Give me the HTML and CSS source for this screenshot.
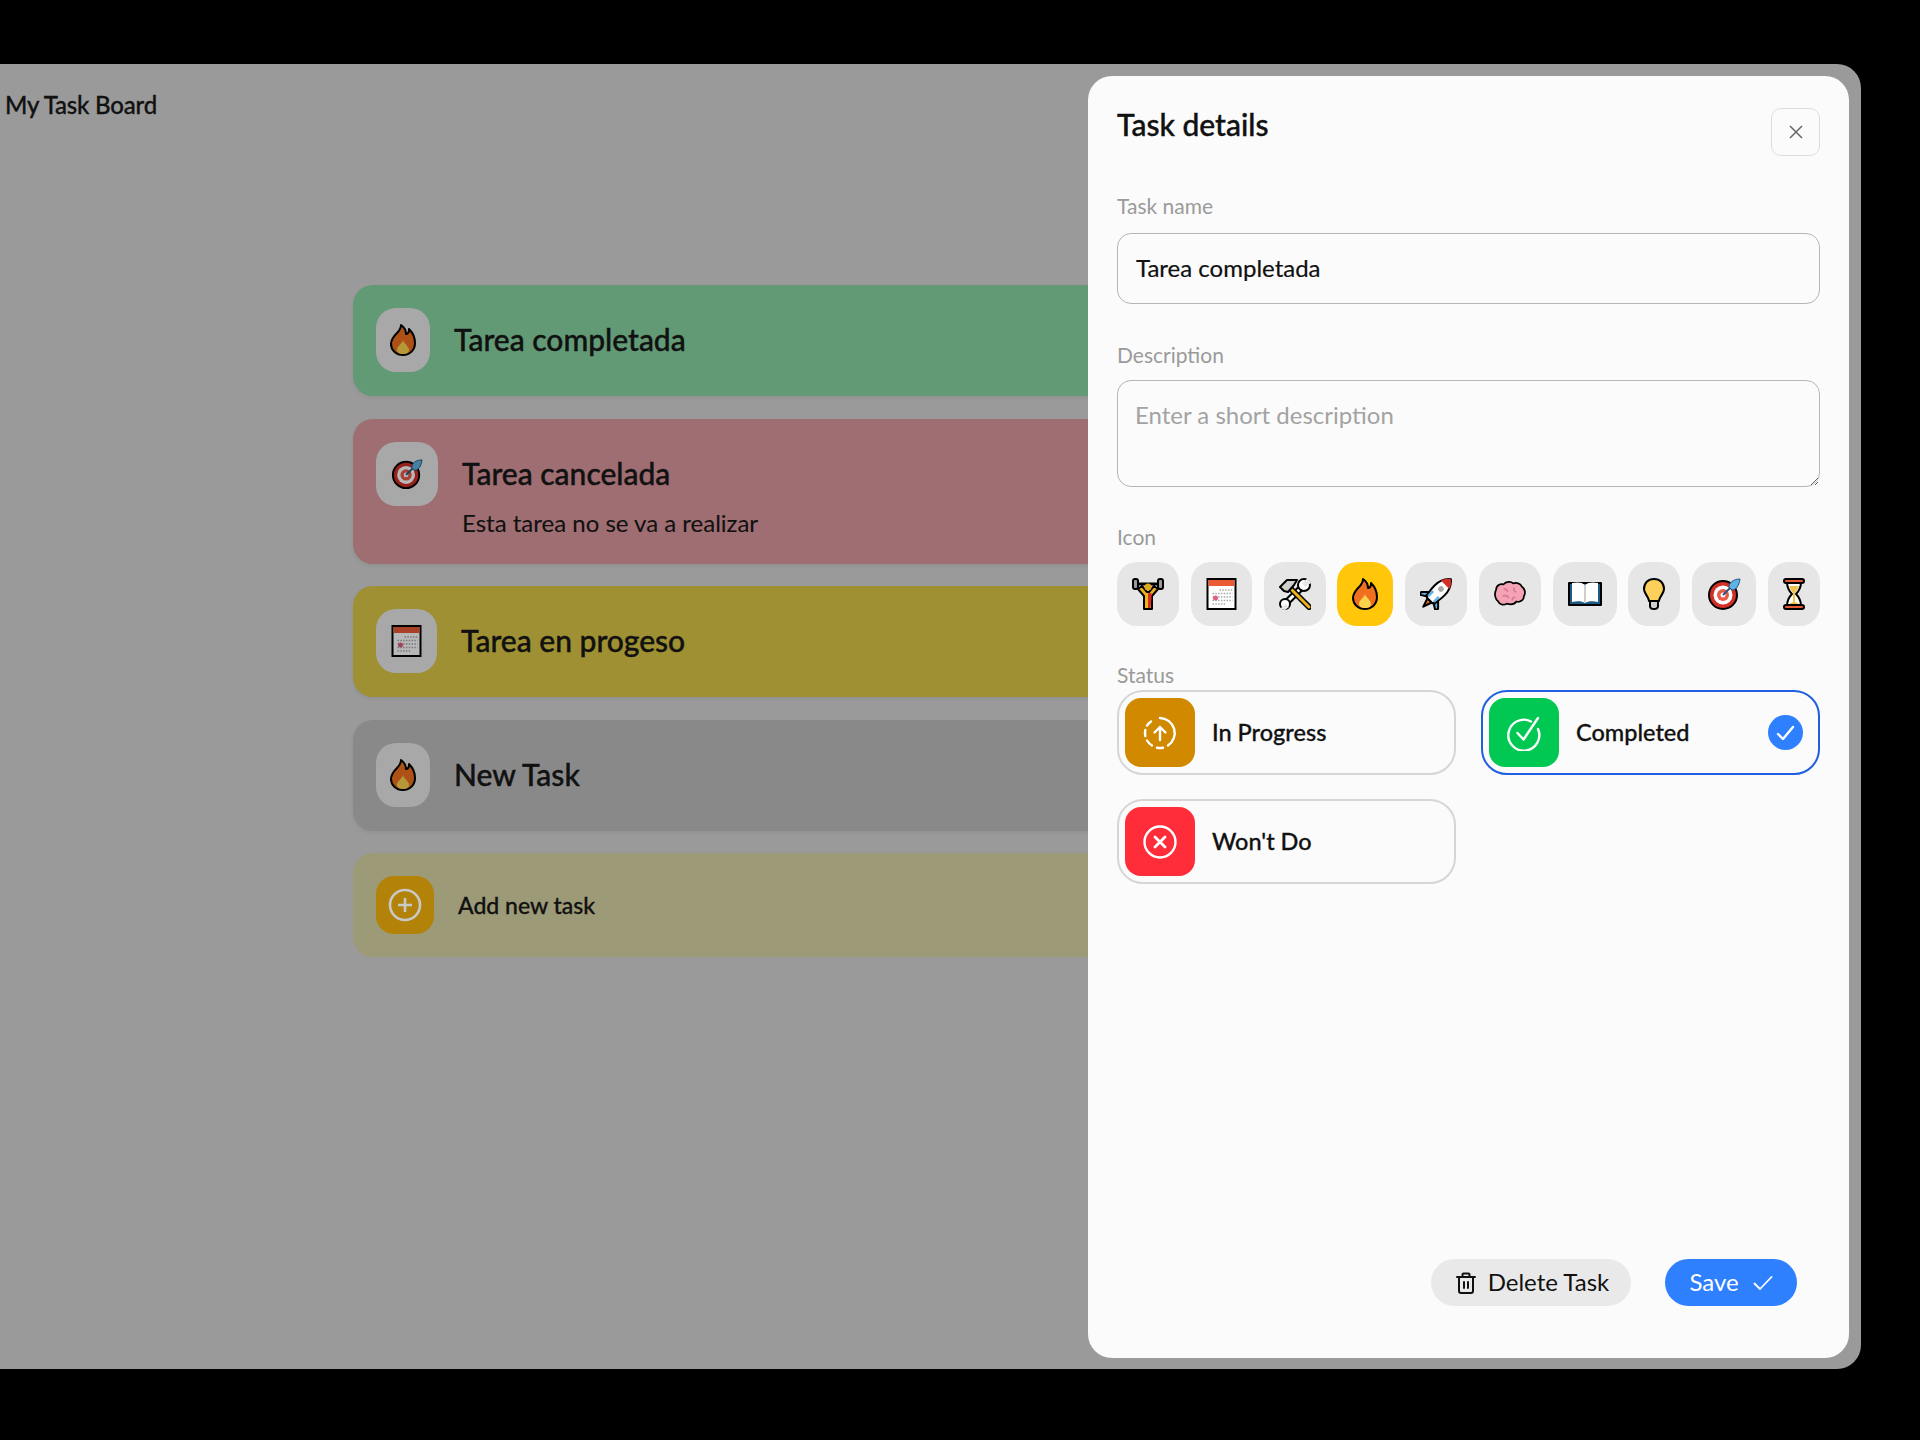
FILE: index.html
```html
<!DOCTYPE html>
<html lang="en">
<head>
    <meta charset="UTF-8">
    <meta name="viewport" content="width=device-width, initial-scale=1.0">
    <title>My Task Board</title>
    <link rel="stylesheet" href="styles.css">
</head>
<body>
    <!-- Emoji set, every symbol is drawn 32 units tall -->
    <svg class="defs" width="0" height="0">
        <symbol id="lifter" viewBox="0 0 32 32">
            <path d="M5 6h22" stroke="#000" stroke-width="3"/>
            <rect x="1" y="1" width="5" height="10" rx="2" fill="#9b9b9a" stroke="#000" stroke-width="2"/>
            <rect x="26" y="1" width="5" height="10" rx="2" fill="#9b9b9a" stroke="#000" stroke-width="2"/>
            <path d="M6 11l6 7v13h8V18l6-7-4-3-5 6h-2l-5-6z" fill="#f1b31c" stroke="#000" stroke-width="2" stroke-linejoin="round"/>
            <circle cx="16" cy="9" r="3.500" fill="#e3a71c"/>
            <path d="M16 15h3.500v6l-1 9H16z" fill="#d22f27"/>
        </symbol>
        <symbol id="calendar" viewBox="0 0 30 32">
            <rect x="1" y="1" width="28" height="30" fill="#fff" stroke="#000" stroke-width="2"/>
            <rect x="2" y="2" width="26" height="6" fill="#ea5a35"/>
            <g stroke="#a8a8a8" stroke-width="1.500" stroke-dasharray="1.500 1.300">
                <path d="M13 12h13M6 15.500h20M6 19h20M6 22.500h20M6 26h13"/>
            </g>
            <circle cx="9" cy="20" r="2.500" fill="#e0607e"/>
        </symbol>
        <symbol id="tools" viewBox="0 0 32 32">
            <path d="M24 8L7 25" stroke="#000" stroke-width="7"/>
            <path d="M24 8L7 25" stroke="#fff" stroke-width="3"/>
            <circle cx="25" cy="7" r="6" fill="#fff" stroke="#000" stroke-width="2"/>
            <path d="M29 0l-6 5 3 4 6-4z" fill="#e6e6e6"/>
            <circle cx="6" cy="26" r="5" fill="#fff" stroke="#000" stroke-width="2"/>
            <path d="M1 31l5-5 4 3-4 3z" fill="#e6e6e6"/>
            <path d="M12 11l18 18" stroke="#000" stroke-width="6" stroke-linecap="round"/>
            <path d="M12 11l18 18" stroke="#f1b31c" stroke-width="3" stroke-linecap="round"/>
            <path d="M1 9l7-7h10l-3 5-6 7-4-1-2-2z" fill="#d0cfce" stroke="#000" stroke-width="2" stroke-linejoin="round"/>
        </symbol>
        <symbol id="flame" viewBox="0 0 26 32">
            <path d="M11 1c3 2 5 5 5 9 2 0 3-2 3-5 4 4 6 9 6 14 0 7-5 12-12 12S1 26 1 20c0-5 3-8 6-11 2-2 4-4 4-8z" fill="#f1701f" stroke="#000" stroke-width="2" stroke-linejoin="round"/>
            <path d="M13 16c1 4 6 6 6 10 0 3-3 4-6 4s-6-1-6-4c0-4 5-6 6-10z" fill="#fcd34d"/>
        </symbol>
        <symbol id="rocket" viewBox="0 0 32 32">
            <g transform="rotate(45 16 16)">
                <path d="M10 19l-6 6 1 3 5-3zM22 19l6 6-1 3-5-3z" fill="#61b2e4" stroke="#000" stroke-width="2" stroke-linejoin="round"/>
                <path d="M13 25h6l-3 9z" fill="#f1701f" stroke="#000" stroke-width="2" stroke-linejoin="round"/>
                <path d="M16-5c5 4 7 10 7 16 0 6-1 11-3 14h-8c-2-3-3-8-3-14 0-6 2-12 7-16z" fill="#fff" stroke="#000" stroke-width="2" stroke-linejoin="round"/>
                <path d="M16-5c3 2 5 5 6 8H10c1-3 3-6 6-8z" fill="#d22f27"/>
                <circle cx="16" cy="9" r="2.800" fill="#a8a8a8"/>
                <path d="M12 16v7M20 16v7" stroke="#61b2e4" stroke-width="2.500"/>
            </g>
        </symbol>
        <symbol id="brain" viewBox="1 3 30 26">
            <path d="M3 12c0-4 4-6 7-5 2-3 7-3 9-1 3-1 7 0 8 3 3 2 4 6 2 9 0 4-4 6-7 5-2 3-6 3-9 2-3 2-7 1-8-2-3-2-4-7-2-11z" fill="#f4a3b4" stroke="#000" stroke-width="1.600" stroke-linejoin="round"/>
            <path d="M10 11c2 0 3 1 4 3M20 10c-1 2 0 4 2 4M9 18c3-1 5 0 6 2M21 19c-2 0-3 1-3 3" fill="none" stroke="#d97a92" stroke-width="1.500"/>
        </symbol>
        <symbol id="book" viewBox="0 0 34 32">
            <path d="M1 5h32v22H1z" fill="#1e5a86" stroke="#000" stroke-width="2" stroke-linejoin="round"/>
            <path d="M4 5c5-1 10-1 13 2 3-3 8-3 13-2v19c-5-1-10-1-13 1-3-2-8-2-13-1z" fill="#fff"/>
            <path d="M17 7v18" stroke="#d0cfce" stroke-width="2"/>
        </symbol>
        <symbol id="bulb" viewBox="0 0 22 32">
            <path d="M11 1C5 1 1 5 1 11c0 4 3 6 4 9 .5 1 1 2 1 3h10c0-1 .5-2 1-3 1-3 4-5 4-9 0-6-4-10-10-10z" fill="#fcd05a" stroke="#000" stroke-width="2" stroke-linejoin="round"/>
            <path d="M7 23h8v5c0 2-1 3-4 3s-4-1-4-3z" fill="#d0cfce" stroke="#000" stroke-width="2"/>
        </symbol>
        <symbol id="target" viewBox="0 0 34 32">
            <circle cx="16" cy="17" r="14" fill="#d22f27" stroke="#000" stroke-width="2"/>
            <circle cx="16" cy="17" r="9.500" fill="#fff"/>
            <circle cx="16" cy="17" r="6" fill="#ea5a47"/>
            <circle cx="16" cy="17" r="2.500" fill="#fff"/>
            <path d="M16 17l9-9" stroke="#1e5a86" stroke-width="2"/>
            <path d="M22 9c0-4 4-8 11-8-1 7-4 11-8 11z" fill="#61b2e4" stroke="#1e5a86" stroke-width="1"/>
        </symbol>
        <symbol id="hourglass" viewBox="0 0 22 32">
            <path d="M4 4h14c0 6-2 9-5 12 3 3 5 6 5 12H4c0-6 2-9 5-12-3-3-5-6-5-12z" fill="#fff" stroke="#000" stroke-width="2" stroke-linejoin="round"/>
            <path d="M6 8h10c-1 3-3 5-4 7v9c1 0 3 1 4 3H6c1-2 3-3 4-3v-9C9 13 7 11 6 8z" fill="#f1c34d"/>
            <rect x="1" y="1" width="20" height="4" rx="2" fill="#ea5a35" stroke="#000" stroke-width="2"/>
            <rect x="1" y="27" width="20" height="4" rx="2" fill="#ea5a35" stroke="#000" stroke-width="2"/>
        </symbol>
    </svg>

    <div class="stage">
        <main class="board">
            <h1 class="board-title">My Task Board</h1>
            <div class="task-list">
                <div class="task task-done">
                    <span class="tile tile-flame"><svg width="26" height="32"><use href="#flame"/></svg></span>
                    <div class="task-text"><h3>Tarea completada</h3></div>
                </div>
                <div class="task task-wont">
                    <span class="tile"><svg width="32" height="32"><use href="#target"/></svg></span>
                    <div class="task-text">
                        <h3>Tarea cancelada</h3>
                        <p>Esta tarea no se va a realizar</p>
                    </div>
                </div>
                <div class="task task-progress">
                    <span class="tile"><svg width="31" height="32"><use href="#calendar"/></svg></span>
                    <div class="task-text"><h3>Tarea en progeso</h3></div>
                </div>
                <div class="task task-new">
                    <span class="tile tile-flame"><svg width="26" height="32"><use href="#flame"/></svg></span>
                    <div class="task-text"><h3>New Task</h3></div>
                </div>
                <div class="task task-add">
                    <span class="add-icon">
                        <svg width="34" height="34" viewBox="0 0 34 34" fill="none" stroke="#c9c9c9" stroke-width="2.600">
                            <circle cx="17" cy="17" r="15"/>
                            <path d="M17 10v14M10 17h14"/>
                        </svg>
                    </span>
                    <span class="add-label">Add new task</span>
                </div>
            </div>
        </main>

        <aside class="panel">
            <div class="panel-head">
                <h2>Task details</h2>
                <button class="close-btn" type="button">
                    <svg width="16" height="16" viewBox="0 0 16 16" fill="none" stroke="#666" stroke-width="1.500"><path d="M2 2l12 12M14 2L2 14"/></svg>
                </button>
            </div>

            <label class="field-label name-label">Task name</label>
            <input class="text-input" type="text" value="Tarea completada">

            <label class="field-label desc-label">Description</label>
            <textarea class="text-area" placeholder="Enter a short description"></textarea>

            <label class="field-label">Icon</label>
            <div class="icon-row">
                <span class="pick"><svg width="32" height="32"><use href="#lifter"/></svg></span>
                <span class="pick"><svg width="31" height="32"><use href="#calendar"/></svg></span>
                <span class="pick"><svg width="32" height="32"><use href="#tools"/></svg></span>
                <span class="pick selected"><svg width="26" height="32"><use href="#flame"/></svg></span>
                <span class="pick"><svg width="32" height="32"><use href="#rocket"/></svg></span>
                <span class="pick"><svg width="32" height="32"><use href="#brain"/></svg></span>
                <span class="pick"><svg width="34" height="32"><use href="#book"/></svg></span>
                <span class="pick"><svg width="22" height="32"><use href="#bulb"/></svg></span>
                <span class="pick"><svg width="34" height="32"><use href="#target"/></svg></span>
                <span class="pick"><svg width="22" height="32"><use href="#hourglass"/></svg></span>
            </div>

            <label class="field-label status-label">Status</label>
            <div class="status-grid">
                <div class="status">
                    <span class="status-icon orange">
                        <svg width="34" height="34" viewBox="0 0 34 34" fill="none" stroke="#fff" stroke-width="2.400" stroke-linecap="round" stroke-linejoin="round">
                            <path d="M17 2a15 15 0 0 1 8 27.500M20 31.700a15 15 0 0 1-6 0M9 29.500a15 15 0 0 1-5-5M2.300 20a15 15 0 0 1 0-6M4 9.500a15 15 0 0 1 4-4"/>
                            <path d="M17 24V11M11.500 16.500L17 11l5.500 5.500"/>
                        </svg>
                    </span>
                    <span class="status-name">In Progress</span>
                </div>
                <div class="status active">
                    <span class="status-icon green">
                        <svg width="34" height="36" viewBox="0 0 34 36" fill="none" stroke="#fff" stroke-width="2.400" stroke-linecap="round" stroke-linejoin="round">
                            <path d="M24 6.500A15.500 15.500 0 1 0 31 14"/>
                            <path d="M10.500 18l6 6.500L31 3"/>
                        </svg>
                    </span>
                    <span class="status-name">Completed</span>
                    <span class="status-check">
                        <svg width="19" height="16" viewBox="0 0 19 16" fill="none" stroke="#fff" stroke-width="2.400" stroke-linecap="round" stroke-linejoin="round"><path d="M2 9l5 5L17 2"/></svg>
                    </span>
                </div>
                <div class="status">
                    <span class="status-icon red">
                        <svg width="34" height="34" viewBox="0 0 34 34" fill="none" stroke="#fff" stroke-width="2.400" stroke-linecap="round">
                            <circle cx="17" cy="17" r="15.500"/>
                            <path d="M12 12l10 10M22 12L12 22" stroke-width="2.800"/>
                        </svg>
                    </span>
                    <span class="status-name">Won't Do</span>
                </div>
            </div>

            <div class="panel-foot">
                <button class="btn btn-delete" type="button">
                    <svg width="20" height="22" viewBox="0 0 20 22" fill="none" stroke="#111" stroke-width="2" stroke-linecap="round" stroke-linejoin="round">
                        <path d="M1 5h18M6.500 5V2.500a1 1 0 0 1 1-1h5a1 1 0 0 1 1 1V5M3 5v14a2 2 0 0 0 2 2h10a2 2 0 0 0 2-2V5M8 10v6M12 10v6"/>
                    </svg>
                    Delete Task
                </button>
                <button class="btn btn-save" type="button">
                    Save
                    <svg width="20" height="16" viewBox="0 0 20 16" fill="none" stroke="#fff" stroke-width="1.800" stroke-linecap="round" stroke-linejoin="round"><path d="M1.500 8.500L7 14 18.500 2"/></svg>
                </button>
            </div>
        </aside>
    </div>
</body>
</html>
```

FILE: styles.css
```css
* {
    box-sizing: border-box;
}

body {
    font-family: "Lato", "Liberation Sans", sans-serif;
    margin: 0;
    padding-top: 64px;
    height: 1440px;
    background: #000;
    color: #111;
    overflow: hidden;
}

.defs {
    position: absolute;
}

svg {
    display: block;
    flex: none;
}

/* Page behind the panel, colours are the dimmed ones */
.stage {
    position: relative;
    width: 1861px;
    height: 1305px;
    background: #9a9a9a;
    border-radius: 0 24px 24px 0;
    overflow: hidden;
}

.board-title {
    margin: 0;
    padding: 25px 0 0 5px;
    font-size: 24px;
    line-height: 32px;
    font-weight: 500;
    letter-spacing: -0.2px;
    -webkit-text-stroke: 0.3px #111;
}

.task-list {
    display: flex;
    flex-direction: column;
    gap: 22.500px;
    width: 1155px;
    margin: 164px 0 0 353px;
}

.task {
    display: flex;
    align-items: flex-start;
    gap: 24px;
    padding: 23px 23px 24px;
    border-radius: 20px;
    box-shadow: 0 2px 4px rgba(0, 0, 0, 0.06);
}

.task-done { background: #629a75; }
.task-wont { background: #9e6e72; }
.task-progress { background: #9e9033; }
.task-new { background: #898989; }
.task-add { background: #9d9a77; align-items: center; padding-bottom: 23px; box-shadow: none; }

.tile {
    display: flex;
    padding: 16px 15px;
    border-radius: 20px;
    background: #a9a8a8;
}

.tile-flame {
    padding: 16px 14px;
}

.tile svg {
    filter: brightness(0.72);
}

.task-text h3 {
    margin: 0;
    font-size: 30px;
    line-height: 62px;
    padding-bottom: 2px;
    font-weight: 500;
    -webkit-text-stroke: 0.4px #111;
}

.task-text p {
    margin: 0;
    font-size: 24px;
    line-height: 34px;
    -webkit-text-stroke: 0.1px #111;
}

.add-icon {
    display: flex;
    align-items: center;
    justify-content: center;
    width: 58px;
    height: 58px;
    border-radius: 18px;
    background: #b38208;
}

.add-label {
    font-size: 23px;
    font-weight: 500;
    -webkit-text-stroke: 0.3px #111;
}

/* Details panel */
.panel {
    position: absolute;
    top: 12px;
    right: 12px;
    bottom: 11px;
    width: 761px;
    display: flex;
    flex-direction: column;
    padding: 32px 29px 52px;
    background: #fbfbfb;
    border-radius: 24px;
}

.panel-head {
    display: flex;
    justify-content: space-between;
    align-items: flex-start;
}

.panel-head h2 {
    margin: 0;
    font-size: 30px;
    line-height: 33px;
    font-weight: 500;
    -webkit-text-stroke: 0.4px #111;
}

.close-btn {
    display: flex;
    align-items: center;
    justify-content: center;
    width: 49px;
    height: 48px;
    padding: 0;
    background: #fbfbfb;
    border: 1px solid #dedede;
    border-radius: 10px;
}

.field-label {
    display: block;
    margin: 37px 0 13px;
    font-size: 21px;
    line-height: 25px;
    color: #9a9a9a;
}

.name-label {
    margin-bottom: 15px;
}

.desc-label {
    margin-top: 38px;
}

.status-label {
    margin-top: 36px;
    margin-bottom: 3px;
}

.text-input,
.text-area {
    display: block;
    width: 100%;
    padding: 0 18px;
    font-family: inherit;
    font-size: 24px;
    color: #111;
    background: #fbfbfb;
    border: 1px solid #b5b5b5;
    border-radius: 14px;
    outline: none;
}

.text-input {
    height: 71px;
    padding-bottom: 2px;
    -webkit-text-stroke: 0.2px #111;
}

.text-area {
    height: 107px;
    padding: 19px 17px 0;
}

.text-area::placeholder {
    color: #a3a3a3;
}

.icon-row {
    display: flex;
    justify-content: space-between;
}

.pick {
    display: flex;
    padding: 16px 15px;
    border-radius: 20px;
    background: #e6e6e6;
}

.pick.selected {
    background: #ffc60a;
}

.status-grid {
    display: grid;
    grid-template-columns: 1fr 1fr;
    gap: 24px 25px;
}

.status {
    display: flex;
    align-items: center;
    gap: 17px;
    height: 85px;
    padding: 0 15px 0 6px;
    border: 2px solid #d6d6d6;
    border-radius: 26px;
}

.status.active {
    border-color: #2060e0;
}

.status-icon {
    display: flex;
    align-items: center;
    justify-content: center;
    width: 70px;
    height: 69px;
    border-radius: 16px;
}

.orange { background: #d18a00; }
.green { background: #00c853; }
.red { background: #ff2d3a; }

.status-name {
    flex: 1;
    padding-bottom: 2px;
    font-size: 23.500px;
    font-weight: 500;
    -webkit-text-stroke: 0.3px #111;
}

.status-check {
    display: flex;
    align-items: center;
    justify-content: center;
    width: 35px;
    height: 35px;
    border-radius: 50%;
    background: #2f80ff;
}

.panel-foot {
    display: flex;
    justify-content: flex-end;
    gap: 34px;
    margin-top: auto;
    padding-right: 23px;
}

.btn {
    display: flex;
    align-items: center;
    justify-content: center;
    height: 47px;
    padding: 0 0 2px;
    border: none;
    border-radius: 24px;
    font-family: inherit;
    font-size: 24px;
}

.btn svg {
    margin-top: 2px;
}

.btn-delete {
    gap: 12px;
    width: 200px;
    padding-left: 3px;
    color: #111;
    background: #e9e9e9;
}

.btn-save {
    gap: 14px;
    width: 132px;
    color: #fff;
    background: #2f80ff;
}
```
